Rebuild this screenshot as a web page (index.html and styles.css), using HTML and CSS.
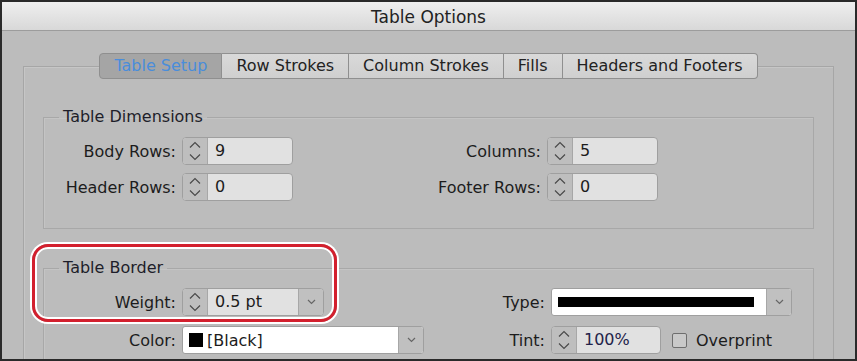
FILE: index.html
```html
<!DOCTYPE html>
<html>

<head>
    <meta charset="UTF-8">
    <link rel="stylesheet" href="styles.css">
</head>

<body>
    <div class="window">
        <div class="title-bar">Table Options</div>

        <div class="tab-box">
            <div class="tabs">
                <div class="tab active">Table Setup</div>
                <div class="tab">Row Strokes</div>
                <div class="tab">Column Strokes</div>
                <div class="tab">Fills</div>
                <div class="tab">Headers and Footers</div>
            </div>

            <fieldset class="group group-dims">
                <legend>Table Dimensions</legend>
                <div class="grid grid-dims">
                    <div class="label">Body Rows:</div>
                    <div class="spin w-dim">
                        <div class="spin-arrows">
                            <svg width="12" height="22" viewBox="0 0 12 22"><path d="M1 7.5 L6 2.5 L11 7.5 M1 14.5 L6 19.5 L11 14.5" fill="none" stroke="#4a4a4a" stroke-width="1.2"/></svg>
                        </div>
                        <div class="spin-value">9</div>
                    </div>
                    <div class="label">Columns:</div>
                    <div class="spin w-dim">
                        <div class="spin-arrows">
                            <svg width="12" height="22" viewBox="0 0 12 22"><path d="M1 7.5 L6 2.5 L11 7.5 M1 14.5 L6 19.5 L11 14.5" fill="none" stroke="#4a4a4a" stroke-width="1.2"/></svg>
                        </div>
                        <div class="spin-value">5</div>
                    </div>

                    <div class="label">Header Rows:</div>
                    <div class="spin w-dim">
                        <div class="spin-arrows">
                            <svg width="12" height="22" viewBox="0 0 12 22"><path d="M1 7.5 L6 2.5 L11 7.5 M1 14.5 L6 19.5 L11 14.5" fill="none" stroke="#4a4a4a" stroke-width="1.2"/></svg>
                        </div>
                        <div class="spin-value">0</div>
                    </div>
                    <div class="label">Footer Rows:</div>
                    <div class="spin w-dim">
                        <div class="spin-arrows">
                            <svg width="12" height="22" viewBox="0 0 12 22"><path d="M1 7.5 L6 2.5 L11 7.5 M1 14.5 L6 19.5 L11 14.5" fill="none" stroke="#4a4a4a" stroke-width="1.2"/></svg>
                        </div>
                        <div class="spin-value">0</div>
                    </div>
                </div>
            </fieldset>

            <fieldset class="group group-border">
                <legend>Table Border</legend>
                <div class="grid grid-border">
                    <div class="label">Weight:</div>
                    <div class="spin w-weight">
                        <div class="spin-arrows">
                            <svg width="12" height="22" viewBox="0 0 12 22"><path d="M1 7.5 L6 2.5 L11 7.5 M1 14.5 L6 19.5 L11 14.5" fill="none" stroke="#4a4a4a" stroke-width="1.2"/></svg>
                        </div>
                        <div class="spin-value">0.5 pt</div>
                        <div class="drop">
                            <svg width="9" height="6" viewBox="0 0 9 6"><path d="M1 1 L4.5 4.5 L8 1" fill="none" stroke="#666" stroke-width="1.2"/></svg>
                        </div>
                    </div>
                    <div class="label">Type:</div>
                    <div class="select w-type">
                        <div class="select-field">
                            <div class="stroke-line"></div>
                        </div>
                        <div class="drop">
                            <svg width="9" height="6" viewBox="0 0 9 6"><path d="M1 1 L4.5 4.5 L8 1" fill="none" stroke="#666" stroke-width="1.2"/></svg>
                        </div>
                    </div>

                    <div class="label">Color:</div>
                    <div class="select w-color">
                        <div class="select-field">
                            <span class="swatch"></span>
                            <span>[Black]</span>
                        </div>
                        <div class="drop">
                            <svg width="9" height="6" viewBox="0 0 9 6"><path d="M1 1 L4.5 4.5 L8 1" fill="none" stroke="#666" stroke-width="1.2"/></svg>
                        </div>
                    </div>
                    <div class="label">Tint:</div>
                    <div class="tint-row">
                        <div class="spin w-tint">
                            <div class="spin-arrows">
                                <svg width="12" height="22" viewBox="0 0 12 22"><path d="M1 7.5 L6 2.5 L11 7.5 M1 14.5 L6 19.5 L11 14.5" fill="none" stroke="#4a4a4a" stroke-width="1.2"/></svg>
                            </div>
                            <div class="spin-value tint-value">100%</div>
                        </div>
                        <span class="checkbox"></span>
                        <span>Overprint</span>
                    </div>
                </div>
            </fieldset>
        </div>

        <div class="highlight"></div>
    </div>
</body>

</html>
```

FILE: styles.css
```css
body {
    margin: 0;
    font-family: "DejaVu Sans", sans-serif;
    font-size: 16px;
    color: #1c1c1c;
}

.window {
    width: 857px;
    height: 361px;
    box-sizing: border-box;
    border: 2px solid #2a2a2a;
    background-color: #bcbcbc;
    overflow: hidden;
    position: relative;
}

.title-bar {
    height: 29px;
    padding-top: 1px;
    box-sizing: border-box;
    line-height: 29px;
    text-align: center;
    font-size: 17px;
    color: #222;
    background: linear-gradient(#efefef, #d8d8d8);
    border-bottom: 1px solid #9c9c9c;
}

.tab-box {
    margin: 35px 21px 0 21px;
    height: 400px;
    border: 1px solid #a6a6a6;
    box-shadow: inset 1px 1px 0 #c6c6c6;
}

.tabs {
    display: flex;
    justify-content: center;
    margin-top: -14px;
}

.tab {
    height: 24px;
    line-height: 24px;
    padding: 0 14px;
    background: linear-gradient(#d9d9d9, #cfcfcf);
    border: 1px solid #8f8f8f;
    border-left: none;
    color: #222;
}

.tab:first-child {
    border-left: 1px solid #8f8f8f;
    border-radius: 4px 0 0 4px;
}

.tab:last-child {
    border-radius: 0 4px 4px 0;
}

.tab.active {
    background: #a5a5a5;
    color: #4a8ddb;
}

.group {
    margin: 0 19px;
    padding: 0;
    border: 1px solid #a8a8a8;
    box-shadow: inset 1px 1px 0 #c4c4c4;
}

.group legend {
    margin-left: 15px;
    padding: 0 4px;
    line-height: 20px;
    color: #1e1e2a;
}

.group-dims {
    margin-top: 28px;
    padding: 10px 0 27px 0;
}

.group-border {
    margin-top: 29px;
    padding: 10px 0 30px 0;
}

.grid {
    display: grid;
    column-gap: 6px;
    align-items: center;
    justify-items: start;
}

.grid-dims {
    grid-template-columns: 132px 242px 111px auto;
    row-gap: 8px;
}

.grid-border {
    grid-template-columns: 132px 242px 115px auto;
    row-gap: 10px;
}

.label {
    justify-self: end;
    white-space: nowrap;
}

.spin {
    display: flex;
    height: 26px;
    border: 1px solid #9f9f9f;
    border-radius: 4px;
    background-color: #e1e1e1;
    overflow: hidden;
}

.spin-arrows {
    width: 24px;
    display: flex;
    align-items: center;
    justify-content: center;
    background-color: #bebebe;
    border-right: 1px solid #a7a7a7;
}

.spin-value {
    flex: 1;
    padding-left: 7px;
    line-height: 26px;
}

.tint-value {
    color: #23234a;
}

.drop {
    width: 24px;
    display: flex;
    align-items: center;
    justify-content: center;
    background-color: #c0c0c0;
    border-left: 1px solid #a7a7a7;
}

.w-dim {
    width: 109px;
}

.w-weight {
    width: 140px;
}

.w-tint {
    width: 108px;
}

.select {
    display: flex;
    height: 26px;
    border: 1px solid #9f9f9f;
    border-radius: 3px;
    background-color: #fff;
    overflow: hidden;
}

.w-type {
    width: 239px;
}

.w-color {
    width: 240px;
}

.select-field {
    flex: 1;
    display: flex;
    align-items: center;
    gap: 4px;
    padding: 0 6px;
}

.stroke-line {
    flex: 1;
    height: 10px;
    background-color: #000;
    margin-right: 6px;
}

.swatch {
    width: 14px;
    height: 14px;
    background-color: #000;
}

.tint-row {
    display: flex;
    align-items: center;
}

.checkbox {
    width: 13px;
    height: 13px;
    margin: 0 9px 0 11px;
    border: 1px solid #6e6e6e;
    border-radius: 2px;
    background-color: #c9c9c9;
}

/* red annotation drawn over the Table Border group */
.highlight {
    position: absolute;
    left: 30px;
    top: 242px;
    width: 299px;
    height: 72px;
    border: 3px solid #d3202e;
    border-radius: 16px;
    box-shadow: 0 0 0 2px #fff, inset 0 0 0 2px #fff;
}
```
